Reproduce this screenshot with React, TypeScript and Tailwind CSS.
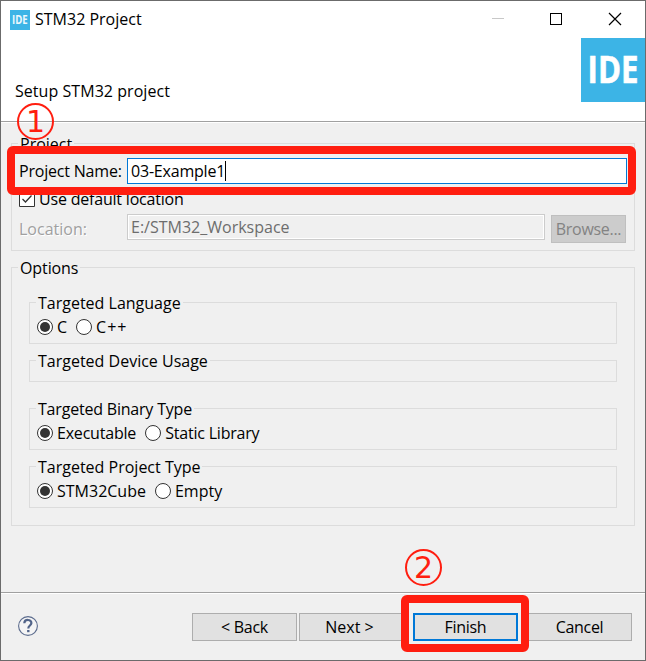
import React, { useState } from 'react';

interface GroupProps {
  title: string;
  className?: string;
  children?: React.ReactNode;
}

const Group: React.FC<GroupProps> = ({ title, className = '', children }) => (
  <section className={`flex flex-col items-stretch border border-[#dcdcdc] ${className}`}>
    <h2 className="-mt-3 ml-1.5 h-6 self-start bg-[#f0f0f0] px-0.5 leading-6">{title}</h2>
    {children}
  </section>
);

interface RadioRowProps {
  options: string[];
}

const RadioRow: React.FC<RadioRowProps> = ({ options }) => {
  const [selected, setSelected] = useState(options[0]);

  return (
    <div className="flex h-6 items-center gap-[9px] pl-[7px]">
      {options.map((option) => (
        <button
          key={option}
          onClick={() => setSelected(option)}
          className="flex items-center gap-1"
        >
          <span className="flex h-4 w-4 items-center justify-center rounded-full border border-[#333] bg-white">
            {selected === option && <span className="h-2.5 w-2.5 rounded-full bg-[#333]" />}
          </span>
          <span className={option === 'C++' ? 'leading-6 tracking-[1px]' : 'leading-6'}>{option}</span>
        </button>
      ))}
    </div>
  );
};

interface StepBadgeProps {
  step: number;
  className: string;
}

const StepBadge: React.FC<StepBadgeProps> = ({ step, className }) => (
  <div
    className={`absolute flex h-[37px] w-[37px] items-center justify-center rounded-full border-2 border-[#ff1e10] font-['DejaVu_Sans',sans-serif] text-[30px] leading-none text-[#ff1e10] ${className}`}
  >
    <span>{step}</span>
  </div>
);

export default function App() {
  const [projectName, setProjectName] = useState('03-Example1');

  return (
    <div className="relative flex h-[661px] w-[646px] flex-col overflow-hidden border border-[#6b6b6b] bg-[#f0f0f0] font-['Open_Sans',sans-serif] text-base text-black">
      {/* Title bar and banner */}
      <header className="flex h-[121px] shrink-0 flex-col border-b border-[#a0a0a0] bg-white">
        <div className="flex h-[37px] shrink-0 items-center pl-[9px]">
          <span className="flex h-5 w-5 items-center justify-center bg-[#3cb4e6] text-xs font-bold text-white/90">
            <span className="scale-x-[0.8]">IDE</span>
          </span>
          <span className="-mt-px ml-[5px]">STM32 Project</span>
          <div className="ml-auto flex items-center pr-[23px]">
            <svg width="130" height="15" viewBox="0 0 130 15" fill="none" shapeRendering="crispEdges">
              <path d="M0 6.5h12" stroke="#c8c8c8" />
              <path d="M58.5 1.5h11v11h-11z" stroke="#000" />
              <path d="M117 1l12 12M129 1l-12 12" stroke="#000" strokeWidth="1.2" shapeRendering="auto" />
            </svg>
          </div>
        </div>
        <div className="flex justify-between">
          <h1 className="mt-[41px] ml-3.5 leading-6 tracking-[0.05px]">Setup STM32 project</h1>
          <div className="flex h-16 w-16 items-center justify-center bg-[#3cb4e6] text-[38px] leading-none font-bold text-white">
            <span className="-mt-1 scale-x-[0.82] [-webkit-text-stroke:0.6px_#fff]">IDE</span>
          </div>
        </div>
      </header>

      <main className="flex h-[471px] shrink-0 flex-col border-t border-b border-t-white border-b-[#a0a0a0] px-2.5 pt-5">
        <Group title="Project" className="h-[108px]">
          <div className="mt-0.5 flex h-[26px] items-center pl-[7px]">
            <label className="w-[108px] shrink-0 tracking-[-0.2px]">Project Name:</label>
            <div className="flex h-[26px] w-[500px] shrink-0 items-center border border-[#0078d7] bg-white pl-[3px]">
              <span
                contentEditable
                suppressContentEditableWarning
                onBlur={(e) => setProjectName(e.currentTarget.textContent || '')}
                className="tracking-[-0.2px] outline-none"
              >
                {projectName}
              </span>
              <span className="h-5 w-px bg-black" />
            </div>
          </div>
          <div className="mt-[3px] flex h-6 items-center pl-[7px]">
            <svg width="16" height="16" viewBox="0 0 16 16" fill="none">
              <path d="M.5.5h15v15H.5z" fill="#fff" stroke="#333" />
              <path d="M3.5 8l3 3 6-6.5" stroke="#333" strokeWidth="1.3" />
            </svg>
            <span className="ml-1 tracking-[-0.2px]">Use default location</span>
          </div>
          <div className="mt-1 flex h-7 items-center pl-[7px]">
            <span className="w-[108px] shrink-0 text-[#a0a0a0] [text-shadow:1px_1px_0_#fff]">Location:</span>
            <div className="-mt-px flex h-[26px] w-[418px] items-center self-start border border-[#ccc] pl-[3px] text-[#6d6d6d] shadow-[inset_0_0_0_1px_#fff]">
              E:/STM32_Workspace
            </div>
            <button className="ml-1.5 h-7 w-[75px] border border-[#bfbfbf] bg-[#ccc] tracking-[-0.3px] text-[#838383]">
              Browse...
            </button>
          </div>
        </Group>

        <section className="mt-4 flex h-[259px] flex-col border border-[#dcdcdc]">
          <h2 className="-mt-3 ml-1.5 h-6 self-start bg-[#f0f0f0] px-0.5 leading-6 tracking-[-0.1px]">Options</h2>
          <div className="flex flex-col px-[17px]">
            <Group title="Targeted Language" className="mt-[22px] h-[42px]">
              <RadioRow options={['C', 'C++']} />
            </Group>
            <Group title="Targeted Device Usage" className="mt-4 h-[22px]" />
            <Group title="Targeted Binary Type" className="mt-[26px] h-[42px] tracking-[-0.2px]">
              <RadioRow options={['Executable', 'Static Library']} />
            </Group>
            <Group title="Targeted Project Type" className="mt-4 h-[42px]">
              <RadioRow options={['STM32Cube', 'Empty']} />
            </Group>
          </div>
        </section>
      </main>

      <footer className="flex grow items-start border-t border-white pt-[19px] pr-[13px] pl-[17px] tracking-[-0.3px]">
        <svg className="mt-[3px]" width="20" height="20" viewBox="0 0 20 20" fill="none">
          <circle cx="10" cy="10" r="9.4" fill="#f5f5f5" stroke="#5b6b8d" strokeWidth="1.1" />
          <path d="M6.3 7.2C6.5 2.8 13.7 3 13.4 7.2c-.2 2.3-3.1 2.4-3.1 5.2" stroke="#53658a" strokeWidth="2.2" />
          <path d="M9.1 14h2.4v2.2H9.1z" fill="#53658a" />
        </svg>
        <button className="ml-auto h-7 w-[105px] border border-[#adadad] bg-[#e1e1e1]">&lt; Back</button>
        <button className="ml-0.5 h-7 w-[105px] border border-[#adadad] bg-[#e1e1e1] pr-1 tracking-normal">Next &gt;</button>
        <button className="ml-[9px] h-7 w-[105px] border-2 border-[#0078d7] bg-[#e1e1e1]">Finish</button>
        <button className="ml-[9px] h-7 w-[105px] border border-[#adadad] bg-[#e1e1e1]">Cancel</button>
      </footer>

      {/* Step markers */}
      <div className="pointer-events-none absolute top-[145px] left-1.5 h-[49px] w-[629px] rounded-md border-8 border-[#ff1e10]" />
      <div className="pointer-events-none absolute top-[594px] left-[400px] h-[57px] w-32 rounded-md border-8 border-[#ff1e10]" />
      <StepBadge step={1} className="top-[102px] left-4" />
      <StepBadge step={2} className="top-[548px] left-[404px]" />
    </div>
  );
}
